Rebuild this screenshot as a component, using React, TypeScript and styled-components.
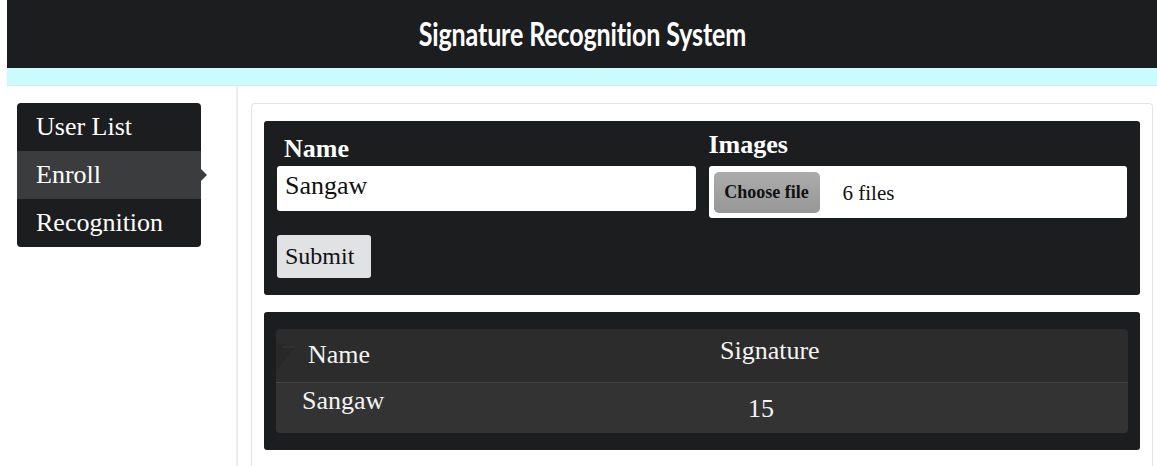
import React, { useState } from 'react';
import styled, { createGlobalStyle } from 'styled-components';

const GlobalStyle = createGlobalStyle`
  html, body {
    margin: 0;
    padding: 0;
    background: #ffffff;
    font-family: "Liberation Serif", "Times New Roman", serif;
  }
`;

const Page = styled.div`
  padding-left: 7px;
  min-height: 466px;
  overflow: hidden;
`;

const TopBar = styled.header`
  height: 68px;
  background: #1c1d1f;
  display: flex;
  align-items: center;
  justify-content: center;
`;

const Title = styled.h1`
  margin: 0;
  font-family: Lato, "Open Sans", sans-serif;
  font-weight: 700;
  font-size: 33px;
  color: #ffffff;
  white-space: nowrap;
  transform: scaleX(0.76);
  letter-spacing: -0.2px;
  margin-top: -2px;
`;

const Strip = styled.div`
  height: 17px;
  background: #cbfcfd;
  border-bottom: 1px solid #d8e9ea;
`;

const Content = styled.div`
  display: flex;
  align-items: stretch;
  min-height: 380px;
`;

const SideColumn = styled.aside`
  width: 231px;
  box-sizing: border-box;
  flex-shrink: 0;
  border-right: 2px solid #ededed;
  padding: 17px 0 0 10px;
`;

const Menu = styled.nav`
  width: 184px;
  background: #1c1d1f;
  border-radius: 4px;
  display: flex;
  flex-direction: column;
`;

const MenuItem = styled.a<{ $active?: boolean }>`
  position: relative;
  display: flex;
  align-items: center;
  height: 48px;
  padding-left: 19px;
  font-size: 26px;
  color: #ffffff;
  text-decoration: none;
  cursor: pointer;
  background: ${(p) => (p.$active ? '#3b3c3e' : 'transparent')};

  &::after {
    content: '';
    display: ${(p) => (p.$active ? 'block' : 'none')};
    position: absolute;
    right: -6px;
    top: 50%;
    margin-top: -6px;
    border-style: solid;
    border-width: 6px 0 6px 6px;
    border-color: transparent transparent transparent #3b3c3e;
  }
`;

const Main = styled.main`
  flex: 1;
  padding: 17px 4px 0 13px;
`;

const Card = styled.section`
  border: 1px solid #e4e4e4;
  border-bottom: none;
  border-radius: 4px 4px 0 0;
  padding: 17px 12px 20px;
  display: flex;
  flex-direction: column;
  gap: 17px;
`;

const DarkBox = styled.div<{ $pad: string }>`
  background: #1c1d1f;
  border-radius: 3px;
  padding: ${(p) => p.$pad};
`;

const FieldRow = styled.div`
  display: grid;
  grid-template-columns: 1fr 1fr;
  gap: 13px;
`;

const Field = styled.div<{ $top: number }>`
  display: flex;
  flex-direction: column;
  padding-top: ${(p) => p.$top}px;
`;

const Label = styled.label<{ $gap: number; $indent: number }>`
  font-size: 26px;
  font-weight: 700;
  color: #ffffff;
  line-height: 30px;
  padding-left: ${(p) => p.$indent}px;
  margin-bottom: ${(p) => p.$gap}px;
`;

const TextInput = styled.input`
  height: 45px;
  box-sizing: border-box;
  border: none;
  border-radius: 3px;
  padding: 0 8px 6px;
  font-family: "Liberation Serif", serif;
  font-size: 26px;
  color: #111111;
  background: #ffffff;
  outline: none;
`;

const FileBox = styled.div`
  height: 52px;
  box-sizing: border-box;
  background: #ffffff;
  border-radius: 3px;
  padding: 5px;
  display: flex;
  align-items: center;
  gap: 23px;
`;

const ChooseButton = styled.button`
  width: 106px;
  height: 41px;
  border: none;
  border-radius: 5px;
  background: linear-gradient(#acacac, #979797);
  font-family: "Liberation Serif", serif;
  font-weight: 700;
  font-size: 18px;
  color: #111111;
  padding: 0;
  cursor: pointer;
`;

const FileCount = styled.span`
  font-size: 21px;
  color: #111111;
  margin-top: 2px;
`;

const SubmitButton = styled.button`
  margin-top: 17px;
  width: 94px;
  height: 43px;
  border: none;
  border-radius: 3px;
  background: #e1e2e4;
  font-family: "Liberation Serif", serif;
  font-size: 24px;
  color: #111111;
  text-align: left;
  padding: 0 0 0 8px;
  cursor: pointer;
`;

const Table = styled.table`
  width: 100%;
  border-collapse: separate;
  border-spacing: 0;
  border-radius: 4px;
  overflow: hidden;
  color: #f4f4f4;
  font-size: 26px;
`;

const HeadCell = styled.th<{ $pl: number; $pt: number; $w?: string }>`
  position: relative;
  height: 54px;
  box-sizing: border-box;
  vertical-align: top;
  text-align: left;
  font-weight: 400;
  line-height: 30px;
  background: #2c2c2c;
  border-bottom: 1px solid #444444;
  padding: ${(p) => p.$pt}px 0 0 ${(p) => p.$pl}px;
  width: ${(p) => p.$w || 'auto'};
`;

const BodyCell = styled.td<{ $pl: number; $pt: number }>`
  height: 50px;
  box-sizing: border-box;
  vertical-align: top;
  line-height: 30px;
  background: #333333;
  padding: ${(p) => p.$pt}px 0 0 ${(p) => p.$pl}px;
`;

const SortMark = styled.svg`
  position: absolute;
  left: 0;
  top: 14px;
`;

const users = [{ name: 'Sangaw', signatures: 15 }];

export default function App() {
  const [name, setName] = useState('Sangaw');

  return (
    <>
      <GlobalStyle />
      <Page>
        <TopBar>
          <Title>Signature Recognition System</Title>
        </TopBar>
        <Strip />
        <Content>
          <SideColumn>
            <Menu>
              <MenuItem>User List</MenuItem>
              <MenuItem $active>Enroll</MenuItem>
              <MenuItem>Recognition</MenuItem>
            </Menu>
          </SideColumn>
          <Main>
            <Card>
              <DarkBox $pad="0 13px 17px">
                <FieldRow>
                  <Field $top={13}>
                    <Label $gap={2} $indent={7}>Name</Label>
                    <TextInput value={name} onChange={(e) => setName(e.target.value)} />
                  </Field>
                  <Field $top={9}>
                    <Label $gap={6} $indent={0}>Images</Label>
                    <FileBox>
                      <ChooseButton>Choose file</ChooseButton>
                      <FileCount>6 files</FileCount>
                    </FileBox>
                  </Field>
                </FieldRow>
                <SubmitButton>Submit</SubmitButton>
              </DarkBox>
              <DarkBox $pad="17px 12px 17px">
                <Table>
                  <thead>
                    <tr>
                      <HeadCell $pl={32} $pt={11} $w="444px">
                        {/* faint sort marker in the corner of the first header cell */}
                        <SortMark width="20" height="28" viewBox="0 0 20 28">
                          <polygon points="0,0 19,4 0,28" fill="#282828" />
                          <line x1="6" y1="4" x2="19" y2="4" stroke="#3a3a3a" strokeWidth="1" />
                        </SortMark>
                        Name
                      </HeadCell>
                      <HeadCell $pl={0} $pt={7}>Signature</HeadCell>
                    </tr>
                  </thead>
                  <tbody>
                    {users.map((u) => (
                      <tr key={u.name}>
                        <BodyCell $pl={26} $pt={3}>{u.name}</BodyCell>
                        <BodyCell $pl={28} $pt={11}>{u.signatures}</BodyCell>
                      </tr>
                    ))}
                  </tbody>
                </Table>
              </DarkBox>
            </Card>
          </Main>
        </Content>
      </Page>
    </>
  );
}
